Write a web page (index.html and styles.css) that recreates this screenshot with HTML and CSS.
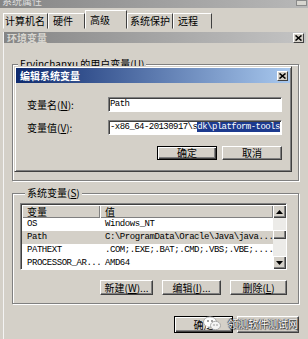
FILE: index.html
```html
<!DOCTYPE html>
<html lang="zh-CN">
<head>
    <meta charset="UTF-8">
    <meta name="viewport" content="width=device-width, initial-scale=1.0">
    <title>系统属性 - 环境变量</title>
    <link rel="stylesheet" href="styles.css">
</head>
<body>
    <div class="sys-title">
        <span>系统属性</span>
        <span class="sys-close"></span>
    </div>

    <div class="tabs">
        <div class="tab tab-name">计算机名</div>
        <div class="tab tab-hw">硬件</div>
        <div class="tab tab-adv active">高级</div>
        <div class="tab tab-prot">系统保护</div>
        <div class="tab tab-remote">远程</div>
    </div>

    <div class="env">
        <div class="env-title">
            <span>环境变量</span>
            <span class="close"><svg width="7" height="6" viewBox="0 0 7 6"><path d="M0.5 0.5 L6.5 5.5 M6.5 0.5 L0.5 5.5" stroke="#000" stroke-width="1.6"/></svg></span>
        </div>

        <div class="env-body">
            <fieldset class="group user-group">
                <legend>Ervinchanxu 的用户变量(<u>U</u>)</legend>
            </fieldset>

            <fieldset class="group sys-group">
                <legend>系统变量(<u>S</u>)</legend>
                <div class="listview">
                    <div class="list-main">
                        <div class="list-head">
                            <span class="col-name">变量</span>
                            <span class="col-val">值</span>
                        </div>
                        <div class="list-row">
                            <span class="col-name">OS</span>
                            <span class="col-val">Windows_NT</span>
                        </div>
                        <div class="list-row selected">
                            <span class="col-name">Path</span>
                            <span class="col-val">C:\ProgramData\Oracle\Java\java...</span>
                        </div>
                        <div class="list-row">
                            <span class="col-name">PATHEXT</span>
                            <span class="col-val">.COM;.EXE;.BAT;.CMD;.VBS;.VBE;....</span>
                        </div>
                        <div class="list-row">
                            <span class="col-name">PROCESSOR_AR...</span>
                            <span class="col-val">AMD64</span>
                        </div>
                    </div>
                    <div class="scrollbar">
                        <div class="sb-btn"><svg width="7" height="4" viewBox="0 0 7 4"><path d="M3.5 0 L7 4 L0 4 Z" fill="#000"/></svg></div>
                        <div class="sb-track"><div class="sb-thumb"></div></div>
                        <div class="sb-btn"><svg width="7" height="4" viewBox="0 0 7 4"><path d="M0 0 L7 0 L3.5 4 Z" fill="#000"/></svg></div>
                    </div>
                </div>
                <div class="btn-row">
                    <button class="btn btn-new">新建(<u>W</u>)...</button>
                    <button class="btn btn-edit">编辑(<u>I</u>)...</button>
                    <button class="btn btn-del">删除(<u>L</u>)</button>
                </div>
            </fieldset>

            <div class="btn-row env-btns">
                <button class="btn btn-default btn-ok">确定</button>
                <!-- covered by the watermark in the screenshot -->
                <button class="btn btn-cancel"></button>
            </div>
        </div>
    </div>

    <!-- dialog window on top of the env dialog -->
    <div class="edit-dialog">
        <div class="edit-title">
            <span>编辑系统变量</span>
            <span class="close"><svg width="7" height="6" viewBox="0 0 7 6"><path d="M0.5 0.5 L6.5 5.5 M6.5 0.5 L0.5 5.5" stroke="#000" stroke-width="1.6"/></svg></span>
        </div>
        <div class="edit-form">
            <label for="varName">变量名(<u>N</u>):</label>
            <div class="field" id="varName">Path</div>
            <label for="varValue">变量值(<u>V</u>):</label>
            <div class="field" id="varValue">-x86_64-20130917\s<span class="sel">dk\platform-tools</span></div>
        </div>
        <div class="btn-row edit-btns">
            <button class="btn btn-default btn-ok">确定</button>
            <button class="btn btn-cancel">取消</button>
        </div>
    </div>

    <div class="watermark">
        <svg width="18" height="15" viewBox="0 0 18 15">
            <ellipse cx="7" cy="6" rx="6.5" ry="5.2" fill="#fff" stroke="#9a9a9a" stroke-width="0.8"/>
            <path d="M3 10 L2.5 13 L6 11 Z" fill="#fff"/>
            <ellipse cx="12.5" cy="9.5" rx="5" ry="4.2" fill="#f4f4f4" stroke="#9a9a9a" stroke-width="0.8"/>
            <circle cx="5" cy="5" r="0.9" fill="#777"/>
            <circle cx="9" cy="5" r="0.9" fill="#777"/>
            <circle cx="11" cy="9" r="0.7" fill="#777"/>
            <circle cx="14" cy="9" r="0.7" fill="#777"/>
        </svg>
        <span>领测软件测试网</span>
    </div>
</body>
</html>
```

FILE: styles.css
```css
* {
    box-sizing: border-box;
}
body {
    margin: 0;
    width: 308px;
    height: 339px;
    overflow: hidden;
    position: relative;
    background-color: #d4d0c8;
    font-family: "Noto Sans CJK SC", sans-serif;
    font-size: 10px;
    color: #000;
}
u {
    text-decoration: underline;
}

/* outer window */
.sys-title {
    display: flex;
    justify-content: space-between;
    height: 8px;
    padding-left: 2px;
    overflow: hidden;
    background: linear-gradient(to right, #858585, #b8b8b8);
    color: #dedede;
    line-height: 2px;
}
.sys-close {
    width: 11px;
    height: 6px;
    margin-right: 1px;
    background-color: #d8d6d0;
    border: 1px solid #8a8a8a;
}
.tabs {
    display: flex;
    align-items: flex-end;
    height: 21px;
    padding-left: 3px;
}
.tab {
    height: 16px;
    padding-left: 4px;
    border: 1px solid;
    border-color: #fff #404040 transparent #fff;
    font-size: 10px;
    line-height: 14px;
    white-space: nowrap;
}
.tab-name { width: 45px; padding-left: 1px; }
.tab-hw { width: 37px; }
.tab-adv { width: 42px; }
.tab-prot { width: 46px; padding-left: 2px; }
.tab-remote { width: 39px; }
.tab.active {
    height: 19px;
    padding-top: 2px;
}

/* environment variables dialog */
.env {
    margin: 3px 2px 0 3px;
    height: 307px;
    border-left: 1px solid #f4f4f4;
}
.env-title {
    display: flex;
    justify-content: space-between;
    align-items: center;
    height: 11px;
    padding: 0 2px 0 3px;
    background: linear-gradient(to right, #858585, #c4c4c4);
    color: #d8d6d0;
    font-weight: bold;
    line-height: 11px;
}
.close {
    display: flex;
    align-items: center;
    justify-content: center;
    width: 11px;
    height: 10px;
    background-color: #d4d0c8;
    border: 1px solid;
    border-color: #fff #404040 #404040 #fff;
}
.env-body {
    padding: 15px 0 0 8px;
}
.group {
    margin: 0;
    padding: 0;
    width: 287px;
    border: 1px solid #808080;
    box-shadow: inset 1px 1px 0 #fff, 1px 1px 0 #fff;
}
.group legend {
    margin-left: 5px;
    padding: 0 2px;
    line-height: 12px;
    background-color: #d4d0c8;
}
.user-group {
    height: 123px;
}
.sys-group {
    margin-top: 6px;
    height: 117px;
    padding: 4px 11px 0 7px;
}

/* list view */
.listview {
    display: flex;
    width: 267px;
    height: 67px;
    background-color: #fff;
    border: 1px solid;
    border-color: #808080 #fff #fff #808080;
    box-shadow: inset 1px 1px 0 #404040;
}
.list-main {
    flex: 1;
    padding: 1px 0 0 1px;
    font-family: "Liberation Mono", monospace;
    font-size: 9px;
    letter-spacing: -0.45px;
}
.list-head {
    display: flex;
    height: 13px;
    background-color: #d4d0c8;
    font-family: "Noto Sans CJK SC", sans-serif;
    font-size: 10px;
    letter-spacing: 0;
    line-height: 13px;
}
.list-head span {
    box-shadow: inset 1px 1px 0 #fff, inset -1px -1px 0 #808080;
}
.list-row {
    display: flex;
    height: 13px;
    line-height: 13px;
    white-space: nowrap;
}
.list-row.selected {
    background-color: #d4d0c8;
}
.col-name {
    width: 78px;
    padding-left: 5px;
    overflow: hidden;
}
.col-val {
    flex: 1;
    padding-left: 5px;
    overflow: hidden;
}
.scrollbar {
    display: flex;
    flex-direction: column;
    width: 13px;
    margin: 1px 0 0;
}
.sb-btn {
    display: flex;
    align-items: center;
    justify-content: center;
    height: 13px;
    background-color: #d4d0c8;
    box-shadow: inset 1px 1px 0 #fff, inset -1px -1px 0 #404040, inset -2px -2px 0 #808080;
}
.sb-track {
    flex: 1;
    background-color: #ecebe8;
}
.sb-thumb {
    height: 9px;
    margin-top: 12px;
    background-color: #d4d0c8;
    box-shadow: inset 1px 1px 0 #fff, inset -1px -1px 0 #404040, inset -2px -2px 0 #808080;
}

/* buttons */
.btn-row {
    display: flex;
    justify-content: flex-end;
}
.btn {
    height: 15px;
    padding: 0;
    font-family: "Noto Sans CJK SC", sans-serif;
    font-size: 10px;
    line-height: 13px;
    color: #000;
    background-color: #d4d0c8;
    border: 1px solid;
    border-color: #fff #404040 #404040 #fff;
    box-shadow: inset -1px -1px 0 #808080;
}
.btn-default {
    border-color: #000;
    box-shadow: inset 1px 1px 0 #fff, inset -1px -1px 0 #404040, inset -2px -2px 0 #808080;
}
.sys-group .btn-row {
    margin-top: 10px;
    gap: 9px;
}
.btn-new { width: 53px; }
.btn-edit { width: 59px; }
.btn-del { width: 57px; }
.env-btns {
    width: 287px;
    margin-top: 12px;
    gap: 4px;
}
.env-btns .btn {
    height: 17px;
}
.env-btns .btn-ok { width: 59px; }
.env-btns .btn-cancel { width: 62px; }

/* edit system variable dialog */
.edit-dialog {
    position: absolute;
    left: 14px;
    top: 66px;
    width: 278px;
    height: 106px;
    padding: 1px;
    background-color: #d4d0c8;
    border: 1px solid;
    border-color: #d4d0c8 #404040 #404040 #d4d0c8;
    box-shadow: inset 1px 1px 0 #fff, inset -1px -1px 0 #808080;
}
.edit-title {
    display: flex;
    justify-content: space-between;
    align-items: center;
    height: 15px;
    padding: 0 2px 0 4px;
    background: linear-gradient(to right, #0e2a6e, #a8c8ee);
    color: #fff;
    font-weight: bold;
    line-height: 15px;
}
.edit-form {
    display: grid;
    grid-template-columns: 81px 174px;
    row-gap: 8px;
    align-items: center;
    padding: 14px 0 0 11px;
}
.field {
    height: 15px;
    padding-left: 1px;
    overflow: hidden;
    white-space: nowrap;
    background-color: #fff;
    border: 1px solid;
    border-color: #808080 #fff #fff #808080;
    box-shadow: inset 1px 1px 0 #404040;
    font-family: "Liberation Mono", monospace;
    font-size: 9px;
    letter-spacing: -0.55px;
    line-height: 13px;
}
.sel {
    background-color: #1c3a8e;
    color: #fff;
}
.edit-btns {
    margin-top: 11px;
    padding-right: 8px;
    gap: 5px;
}
.edit-btns .btn {
    width: 60px;
    height: 14px;
    line-height: 12px;
}

/* overlay watermark */
.watermark {
    position: absolute;
    right: 10px;
    bottom: 7px;
    display: flex;
    align-items: center;
    gap: 7px;
    color: #fff;
    font-size: 10px;
    line-height: 17px;
    text-shadow: 0 0 1px #222, 1px 1px 1px #333, -1px 0 1px #333;
}
```
